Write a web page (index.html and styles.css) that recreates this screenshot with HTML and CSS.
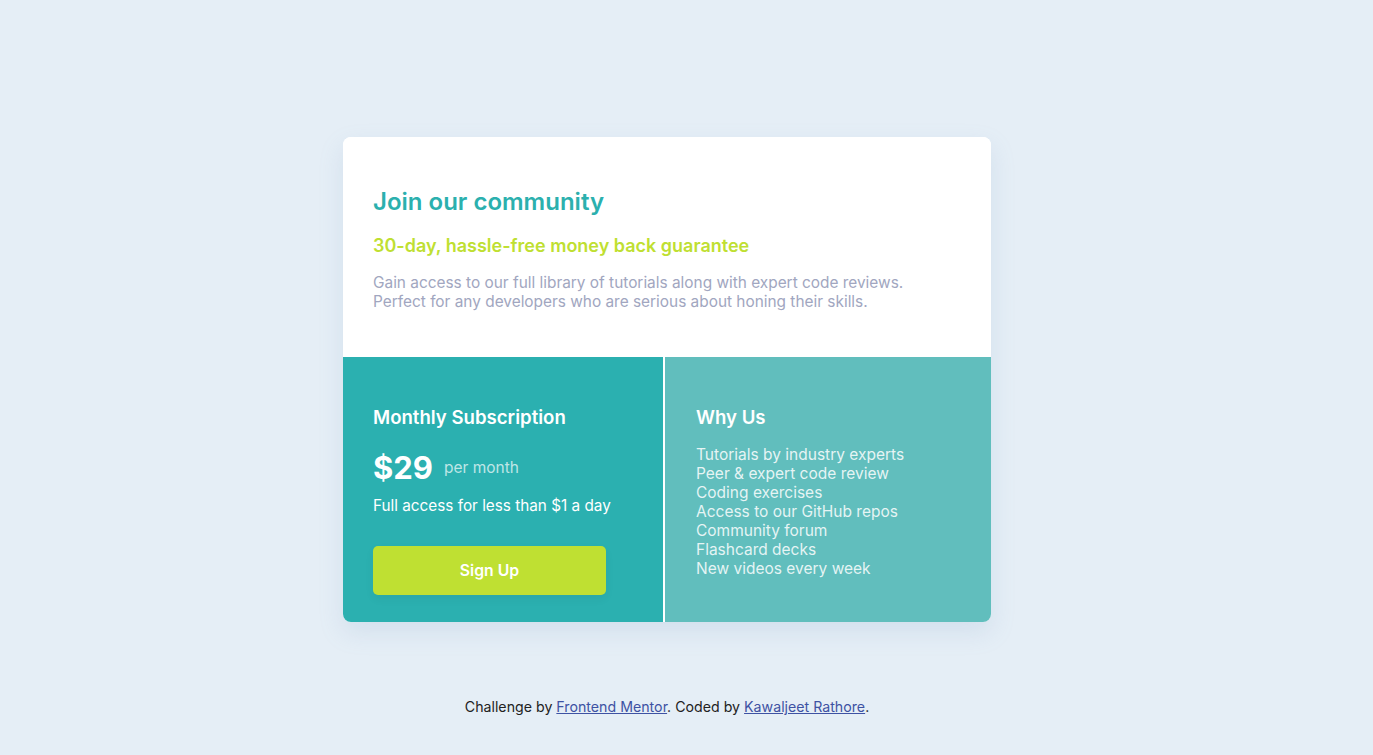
FILE: index.html
```html
<!DOCTYPE html>
<html lang="en">
<head>
<meta charset="utf-8">
<title>Single Price Grid</title>
<link rel="stylesheet" href="styles.css">
</head>
<body>
<main class="page">
  <section class="card">
    <div class="intro">
      <h1 class="intro-title">Join our community</h1>
      <h2 class="intro-sub">30-day, hassle-free money back guarantee</h2>
      <p class="intro-text">Gain access to our full library of tutorials along with expert code reviews.<br>Perfect for any developers who are serious about honing their skills.</p>
    </div>
    <div class="bottom">
      <div class="sub">
        <h3 class="panel-title">Monthly Subscription</h3>
        <div class="price"><span class="price-amount">$29</span><span class="price-unit">per month</span></div>
        <p class="sub-text">Full access for less than $1 a day</p>
        <button class="btn" type="button">Sign Up</button>
      </div>
      <div class="why">
        <h3 class="panel-title">Why Us</h3>
        <ul class="why-list">
          <li>Tutorials by industry experts</li>
          <li>Peer &amp; expert code review</li>
          <li>Coding exercises</li>
          <li>Access to our GitHub repos</li>
          <li>Community forum</li>
          <li>Flashcard decks</li>
          <li>New videos every week</li>
        </ul>
      </div>
    </div>
  </section>
  <footer class="attribution">Challenge by <a href="#">Frontend Mentor</a>. Coded by <a href="#">Kawaljeet Rathore</a>.</footer>
</main>
</body>
</html>
```

FILE: styles.css
```css
* { box-sizing: border-box; }
html, body { margin: 0; padding: 0; }
body {
  background: #e5eef6;
  font-family: Inter, "Open Sans", sans-serif;
  font-size: 15px;
  min-height: 755px;
}
.page {
  display: flex;
  flex-direction: column;
  align-items: center;
  padding-top: 137px;
  padding-right: 39px;
}
.card {
  width: 648px;
  background: #ffffff;
  border-radius: 8px;
  box-shadow: 0 10px 25px rgba(130, 160, 200, 0.18);
  overflow: hidden;
}
.intro {
  padding: 49px 30px 46px;
  background: #fff;
}
.intro-title {
  margin: 0;
  color: #2bb0ae;
  font-size: 24px;
  font-weight: 600;
  line-height: 32px;
}
.intro-sub {
  margin: 17px 0 0;
  color: #bfdf32;
  font-size: 18px;
  font-weight: 600;
  line-height: 22px;
}
.intro-text {
  margin: 16px 0 0;
  color: #a1a6c0;
  font-size: 15.4px;
  line-height: 19px;
}
.bottom {
  display: grid;
  grid-template-columns: 320px 1fr;
  column-gap: 2px;
  height: 265px;
}
.sub {
  background: #2bb0b0;
  padding: 48px 30px 0;
  color: #fff;
}
.why {
  background: #61bebd;
  padding: 48px 31px 0;
  color: #fff;
}
.panel-title {
  margin: 0;
  font-size: 18.6px;
  font-weight: 600;
  line-height: 24px;
}
.price {
  display: flex;
  align-items: center;
  margin-top: 18px;
  height: 40px;
}
.price-amount {
  font-size: 31px;
  font-weight: 700;
}
.price-unit {
  margin-left: 11px;
  font-size: 15.5px;
  color: #bfe6e6;
}
.sub-text {
  margin: 9px 0 0;
  font-size: 15.3px;
  line-height: 20px;
}
.btn {
  display: block;
  margin-top: 30px;
  width: 233px;
  height: 49px;
  border: none;
  border-radius: 5px;
  background: #bfe032;
  color: #fff;
  font-family: inherit;
  font-size: 15.8px;
  font-weight: 600;
  box-shadow: 0 4px 10px rgba(0,0,0,0.05);
}
.why-list {
  list-style: none;
  margin: 16px 0 0;
  padding: 0;
  font-size: 15.5px;
  line-height: 19px;
  color: rgba(255,255,255,0.85);
}
.attribution {
  margin-top: 76px;
  font-size: 14.2px;
  color: #222;
}
.attribution a { color: #3e52a3; }
```
